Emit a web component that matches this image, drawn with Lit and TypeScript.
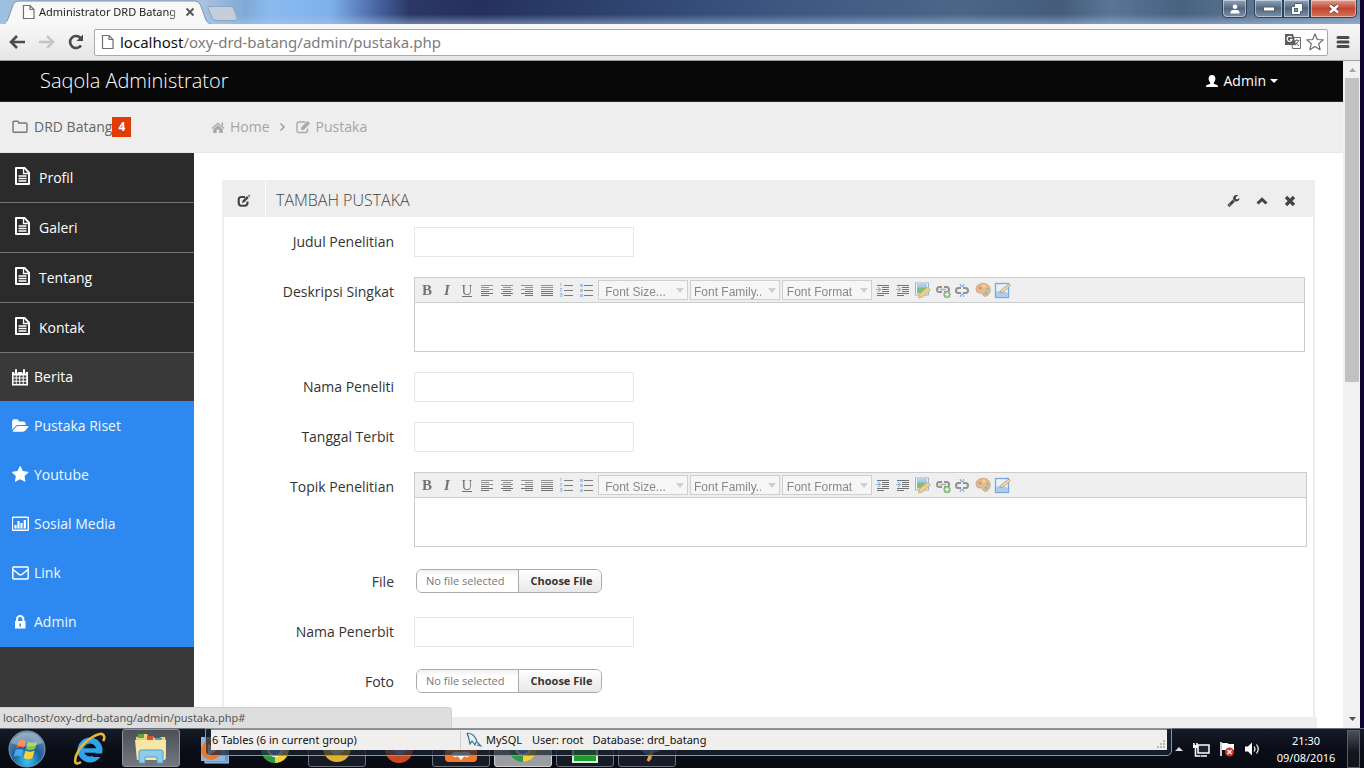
import { LitElement, html, svg, css } from "lit";
import { customElement, state } from "lit/decorators.js";

const STAR =
  "M1728 647q0 22-26 48l-363 354 86 500q1 7 1 20 0 21-10.5 35.5t-30.5 14.5q-19 0-40-12l-449-236-449 236q-22 12-40 12-21 0-31.5-14.5t-10.5-35.5q0-6 2-20l86-500-364-354q-25-27-25-48 0-37 56-46l502-73 225-455q19-41 49-41t49 41l225 455 502 73q56 9 56 46z";
const FOLDER_OPEN =
  "M1943 952q0 31-31 66l-336 396q-43 51-120.5 86.5t-143.5 35.5h-1088q-34 0-60.5-13t-26.5-43q0-31 31-66l336-396q43-51 120.5-86.5t143.5-35.5h1088q34 0 60.5 13t26.5 43zm-343-344v160h-832q-94 0-197 47.500t-164 119.500l-337 396-5 6q0-4-.5-12.500t-.5-12.500v-960q0-92 66-158t158-66h320q92 0 158 66t66 158v32h544q92 0 158 66t66 158z";
const WRENCH =
  "M448 1472q0-26-19-45t-45-19-45 19-19 45 19 45 45 19 45-19 19-45zm644-420l-682 682q-37 37-90 37-52 0-91-37l-106-108q-38-36-38-90 0-53 38-91l681-681q39 98 114.500 173.500t173.500 114.500zm634-435q0 39-23 106-47 134-164.500 217.500t-258.500 83.500q-185 0-316.500-131.500t-131.500-316.500 131.500-316.500 316.500-131.500q58 0 121.500 16.500t107.500 46.500q16 11 16 28t-16 28l-293 169v224l193 107q5-3 79-48.500t135.500-81 70.500-35.500q15 0 23.500 10t8.500 25z";

/* Shared icon wrapper: size in pixels, drawing in its own view box. */
const icon = (w: number, h: number, body: unknown, box = `0 0 ${w} ${h}`) =>
  html`<svg width=${w} height=${h} viewBox=${box} aria-hidden="true">${body}</svg>`;

const ICONS = {
  back: icon(18, 18, svg`<path d="M9 3L3 9l6 6M3.500 9H17" fill="none" stroke="#4b4b4b" stroke-width="2.600"/>`),
  forward: icon(18, 18, svg`<path d="M10 3l6 6-6 6M15.500 9H2" fill="none" stroke="#c4c4c4" stroke-width="2.400"/>`),
  reload: icon(18, 18, svg`<path d="M15 12.500A6 6 0 1 1 14.500 5" fill="none" stroke="#4b4b4b" stroke-width="2.600"/><path d="M17 1.500V8h-6.500z" fill="#4b4b4b"/>`),
  page: icon(14, 16, svg`<path d="M1.500 1.500H8l4 4v9H1.500zM8 1.500v4h4" fill="#fff" stroke="#6f6f6f" stroke-width="1.200"/>`),
  close: icon(10, 10, svg`<path d="M1.500 1.500l7 7M8.500 1.500l-7 7" stroke="#555" stroke-width="1.800"/>`),
  translate: icon(18, 18, svg`<path d="M7 4.500h9.500v11H8.500z" fill="#fff" stroke="#6a6a6a"/><path d="M1 1h8l3 11H1z" fill="#5d5d5d"/><path d="M7.800 4.600A2.500 2.500 0 1 0 8 6.500H6" fill="none" stroke="#fff" stroke-width="1.200"/><path d="M10.500 7.500h5M13 6v1.500M14.500 7.500q-1 3-3.500 5M11.500 8.500q1 3 3.500 4.500" fill="none" stroke="#777"/>`),
  star: icon(18, 18, svg`<path d="M9 1l2.300 5.500 5.900.4-4.500 3.900 1.400 5.900L9 13.500l-5.100 3.200 1.400-5.900L.8 6.900l5.900-.4z" fill="#fff" stroke="#6b6b6b" stroke-width="1.200" stroke-linejoin="round"/>`),
  menu: icon(14, 14, svg`<path d="M2 2.500h10M2 7h10M2 11.500h10" stroke="#4b4b4b" stroke-width="3" stroke-linecap="round"/>`),
  person: icon(10, 10, svg`<circle cx="5" cy="2.800" r="2.300" fill="#fff"/><path d="M.5 9.500V8Q1 6 3 6h4q2 0 2.500 2v1.500z" fill="#fff"/>`),
  minimize: icon(12, 6, svg`<rect x=".5" y="1" width="11" height="4" fill="#fff" stroke="#55616f"/>`),
  restore: icon(12, 12, svg`<path d="M3.500.5h8v8h-2v3h-9v-8h3z" fill="#fff" stroke="#55616f"/><rect x="3.500" y="5.500" width="3" height="3" fill="#8b99aa" stroke="#55616f"/>`),
  exit: icon(12, 10, svg`<path d="M2 1.500l8 7M10 1.500l-8 7" stroke="#6b3232" stroke-width="4"/><path d="M2 1.500l8 7M10 1.500l-8 7" stroke="#fff" stroke-width="2.600"/>`),
  user: icon(14, 14, svg`<path d="M7 1c2.300 0 3.400 1.600 3.400 3.600 0 1.800-.8 3.200-1.600 4v1.100c1.400.8 4.200 1 4.200 2.600V13H1v-.7c0-1.600 2.800-1.800 4.200-2.600V8.600c-.8-.8-1.600-2.200-1.600-4C3.600 2.600 4.700 1 7 1z" fill="#fff"/>`),
  folder: icon(17, 14, svg`<path d="M1 2.200q0-1 1-1h3.600q1 0 1 1v.8h7.400q1 0 1 1v7.300q0 1-1 1H2q-1 0-1-1z" fill="none" stroke="#777" stroke-width="1.400"/>`),
  home: icon(14, 13, svg`<path d="M7 1.500l6.500 5.600-.8.900L7 3.200 1.300 8l-.8-.900z" fill="#a9a9a9"/><path d="M10.500 1.500h1.600v4l-1.600-1.400zM7 4.200l4.800 4V12H8.300V8.800H5.700V12H2.200V8.200z" fill="#a9a9a9"/>`),
  angle: icon(7, 10, svg`<path d="M1.500 1.500L5 5 1.500 8.500" fill="none" stroke="#999" stroke-width="1.400"/>`),
  edit: icon(15, 14, svg`<path d="M9.500 2H3Q1 2 1 4v6.500q0 2 2 2h6.500q2 0 2-2V8.500" fill="none" stroke="#aaa" stroke-width="1.400"/><path d="M5.200 7.300L11.500 1l2.600 2.600-6.300 6.300H5.200z" fill="#aaa"/>`),
  panelEdit: icon(14, 14, svg`<path d="M8 3H4.500Q1.700 3 1.700 5.500v3.200Q1.700 11.700 4.500 11.700h3q3 0 3-3V7.500" fill="none" stroke="#444" stroke-width="2.100"/><path d="M5 9l.5-2.500 4.500-4.500 1.800 1.800L7.300 8.300zM11 1.500l1-.7 1.200 1.200-.8 1z" fill="#444"/>`),
  wrench: icon(13, 13, svg`<path d=${WRENCH} fill="#444"/>`, "0 0 1792 1792"),
  up: icon(12, 12, svg`<path d="M1.500 8.500L6 4.300l4.500 4.200" fill="none" stroke="#444" stroke-width="3"/>`),
  cross: icon(12, 12, svg`<path d="M2 2l8 8M10 2l-8 8" stroke="#444" stroke-width="3.200"/>`),
  doc: icon(15, 18, svg`<path d="M1 1h8.500L14 5.600V17H1z" fill="none" stroke="#fff" stroke-width="2" stroke-linejoin="round"/><path d="M8.500 1v5.500H14M3.500 9h8M3.500 11.500h8M3.500 14h8" fill="none" stroke="#fff" stroke-width="1.300"/>`),
  calendar: icon(17, 17, svg`<path d="M0 3h16v13.500H0z" fill="#fff"/><path d="M1.500 6.500h2.300v2H1.500zm3.200 0H7.200v2H4.700zm3.500 0h2.500v2H8.200zm3.500 0h2.600v2h-2.600zM1.500 9.500h2.300v2.300H1.500zm3.200 0h2.500v2.300H4.700zm3.500 0h2.500v2.300H8.200zm3.500 0h2.600v2.300h-2.600zM1.500 12.800h2.300v2.300H1.500zm3.200 0h2.500v2.300H4.700zm3.500 0h2.500v2.300H8.200zm3.500 0h2.600v2.300h-2.600z" fill="#444"/><path d="M4 1.200v3.300M12 1.200v3.300" stroke="#393939" stroke-width="3.400"/><path d="M4 1v3.300M12 1v3.300" stroke="#fff" stroke-width="2" stroke-linecap="round"/>`),
  folderOpen: icon(18, 16, svg`<path d=${FOLDER_OPEN} fill="#fff"/>`, "50 40 1943 1700"),
  starSolid: icon(17, 17, svg`<path d=${STAR} fill="#fff"/>`, "64 20 1728 1728"),
  chart: icon(17, 16, svg`<rect x=".3" y="1.300" width="16" height="13" rx="1" fill="none" stroke="#fff" stroke-width="1.600"/><path d="M3.500 9v3.500M6.500 5v7.500M9.500 7v5.500M12.800 4v8.500" stroke="#fff" stroke-width="2.200"/>`),
  mail: icon(17, 14, svg`<rect x=".8" y="1" width="15.400" height="12" rx="1" fill="none" stroke="#fff" stroke-width="1.500"/><path d="M1 3.500q3.500 3 6 4.800 1.500 1 3 0 2.500-1.800 6-4.800" fill="none" stroke="#fff" stroke-width="1.500"/>`),
  lock: icon(17, 14, svg`<path d="M3 6h10.500v7.500H3z" fill="#fff"/><path d="M5 6.500V4.200a3.200 3.200 0 0 1 6.400 0v2.300" fill="none" stroke="#fff" stroke-width="2"/><path d="M8.200 8.500v3" stroke="#2d89ef" stroke-width="1.600"/>`),
};

const lines = (rows: number[][]) =>
  svg`${rows.map(([x, w], i) => svg`<rect x=${x} y=${4 + i * 2} width=${w} height="1" fill=${i > 2 ? "#222" : "#555"}/>`)}`;

const chain = svg`<path d="M7 7H4.500a2.500 2.500 0 0 0 0 5H7M9 7h2.500a2.500 2.500 0 0 1 0 5H9" fill="none" stroke="#555" stroke-width="2"/>`;

const TOOLS_LEFT = [
  { name: "Bold", art: html`<b class="glyph">B</b>` },
  { name: "Italic", art: html`<b class="glyph"><i>I</i></b>` },
  { name: "Underline", art: html`<span class="glyph under">U</span>` },
  { name: "Align left", art: icon(18, 18, lines([[3, 12], [3, 8], [3, 12], [3, 8], [3, 12], [3, 8]])) },
  { name: "Align center", art: icon(18, 18, lines([[3, 12], [5, 8], [3, 12], [5, 8], [3, 12], [5, 8]])) },
  { name: "Align right", art: icon(18, 18, lines([[3, 12], [7, 8], [3, 12], [7, 8], [3, 12], [7, 8]])) },
  { name: "Justify", art: icon(18, 18, lines([[3, 12], [3, 12], [3, 12], [3, 12], [3, 12], [3, 12]])) },
  { name: "Ordered list", art: icon(18, 18, svg`<path d="M6 4.500h9M6 9.500h9M6 14.500h9" stroke="#333"/><path d="M2 2.500h1v3M2 7.500h2L2 10h2M2 12.500h2v1.200H2.500 4v1.600H2" fill="none" stroke="#6fa0e0"/>`) },
  { name: "Bullet list", art: icon(18, 18, svg`<path d="M6 4.500h9M6 9.500h9M6 14.500h9" stroke="#333"/><path d="M2 3h3v3H2zM2 8h3v3H2zM2 13h3v3H2z" fill="#7ba6dc"/>`) },
];

const indentArt = icon(18, 18, svg`<path d="M3 4.500h12M8 6.500h7M8 8.500h7M8 10.500h7M3 12.500h12M3 14.500h7" stroke="#222" stroke-width="1.200"/><path d="M2 8.500h4M4 6l2.500 2.500L4 11" fill="none" stroke="#5b8fd8" stroke-width="1.200"/>`);

const TOOLS_RIGHT = [
  { name: "Indent", art: indentArt },
  { name: "Outdent", art: indentArt },
  { name: "Image", art: icon(18, 18, svg`<rect x="1.500" y="2" width="13" height="12" fill="#fff" stroke="#5b8fc0"/><rect x="3" y="3.500" width="10" height="9" fill="#3f9a3f"/><path d="M3 3.500h10v3H3z" fill="#74b5e8"/><path d="M4.500 17l1-4 8-7 3 3-8 7z" fill="#f0b848" stroke="#b07a20" stroke-width=".8"/>`) },
  { name: "Add link", art: icon(18, 18, svg`<g transform="translate(1 -1)">${chain}<path d="M5 9.500h6" stroke="#888" stroke-width="1.600"/></g><circle cx="13" cy="13.500" r="3.600" fill="#3c9a2c"/><path d="M13 11.500v4M11 13.500h4" stroke="#fff" stroke-width="1.400"/>`) },
  { name: "Remove link", art: icon(18, 18, svg`${chain}<path d="M6 3l1.500 3M10 3L8.500 6M6 16l1.500-3M10 16l-1.500-3" stroke="#3d7bdc" stroke-width="1.200"/>`) },
  { name: "Text color", art: icon(18, 18, svg`<path d="M3 11Q0 5 6 3q6-2 9 2 3 5-1 9-3 3-5 0-1-3-3-2-2 0-3-1z" fill="#e09a50" stroke="#a8642a" stroke-width=".8"/><circle cx="6" cy="7" r="1.500" fill="#d44"/><circle cx="10" cy="5" r="1.500" fill="#fc4"/><circle cx="13.500" cy="8" r="1.500" fill="#4a6"/><circle cx="12" cy="12" r="1.500" fill="#48c"/>`) },
  { name: "Edit HTML", art: icon(18, 18, svg`<rect x="1.500" y="2.500" width="13" height="14" fill="#e6f1fd" stroke="#2f78cf" stroke-width="1.300"/><path d="M2 11q5-3 12 1v4H2z" fill="#7fb6ee"/><path d="M6 12l1-3 8-6 1.500 1.500L9 11z" fill="#f2cf78" stroke="#8a6a30" stroke-width=".8"/>`) },
];

const PAGES = ["Profil", "Galeri", "Tentang", "Kontak"];
const MODULES = [
  { label: "Pustaka Riset", art: ICONS.folderOpen },
  { label: "Youtube", art: ICONS.starSolid },
  { label: "Sosial Media", art: ICONS.chart },
  { label: "Link", art: ICONS.mail },
  { label: "Admin", art: ICONS.lock },
];

@customElement("app-root")
export class AppRoot extends LitElement {
  @state() private open = true;

  static styles = css`
    :host {
      display: flex;
      flex-direction: column;
      box-sizing: border-box;
      height: 100vh;
      padding-bottom: 4px;
      background: #fff;
      overflow: hidden;
      font-family: "Open Sans", "Noto Sans", sans-serif;
      font-size: 14px;
      line-height: 20px;
      color: #333;
    }
    * { box-sizing: border-box; }
    svg { display: block; flex: none; }
    a { color: inherit; text-decoration: none; }
    button { font: inherit; color: inherit; border: 0; margin: 0; padding: 0; background: none; display: flex; align-items: center; justify-content: center; }
    ul { list-style: none; margin: 0; padding: 0; }

    .desktop { flex: 1; min-height: 0; display: flex; padding-right: 4px; background: #0d0530; }
    .browser { flex: 1; min-width: 0; display: flex; flex-direction: column; }

    .strip {
      display: flex; height: 24px; padding-left: 6px; position: relative;
      background: linear-gradient(180deg, transparent 60%, rgba(170, 200, 235, 0.5)), linear-gradient(90deg, #9dbfe0 0, #a9c5df 200px, #7fa9d6 245px, #8abaf0 270px, #7fb0ea 330px, #4a68a4 375px, #2b3766 410px, #26305c 480px, #2a3c68 560px, #3b5580 760px, #4c6688 960px, #455c7c 1060px, #5a7596 1110px, #4a6282 1180px, #7690ac 100%);
      flex: none;
    }
    .tab { position: relative; width: 201px; padding-left: 16px; display: flex; align-items: center; gap: 3px; font-size: 12px; color: #222; }
    .tab-shape { position: absolute; left: 0; top: 0; }
    .tab > :not(.tab-shape) { position: relative; }
    .tab-title { flex: none; width: 141px; white-space: nowrap; font-family: "Noto Sans", sans-serif; font-size: 11px; -webkit-mask-image: linear-gradient(90deg, #000 92%, rgba(0, 0, 0, 0.3)); mask-image: linear-gradient(90deg, #000 92%, rgba(0, 0, 0, 0.3)); }
    .tab-close { margin-left: 2px; }
    .controls { margin-left: auto; margin-right: 3px; display: flex; height: 18px; }
    .controls button { height: 18px; border: 1px solid #2f4157; border-top: 0; box-shadow: inset 0 0 0 1px rgba(255, 255, 255, 0.45); background: linear-gradient(#8fa5bd, #53687f 50%, #7b92ab); }
    .profile { width: 25px; margin-right: 7px; border-radius: 0 0 5px 5px; }
    .min { width: 29px; border-radius: 0 0 0 5px; }
    .max { width: 27px; }
    .controls .shut { width: 47px; border-radius: 0 0 5px 0; background: linear-gradient(#e0a090, #c4452f 50%, #d4735a); }

    .toolbar { flex: none; height: 37px; display: flex; align-items: center; padding: 0 10px 0 8px; background: linear-gradient(#f8f8f8, #e6e6e6); border-bottom: 1px solid #a0a0a0; }
    .toolbar nav { display: flex; gap: 11px; }
    .omnibox { flex: 1; height: 27px; margin: 0 8px 0 10px; display: flex; align-items: center; padding: 0 3px 0 6px; gap: 4px; border: 1px solid #a9a9a9; border-radius: 2px; background: #fff; }
    .omnibox .address { flex: 1; font-family: "Noto Sans", sans-serif; font-size: 15px; color: #7c7c7c; padding-left: 1px; }
    .omnibox .address b { font-weight: 400; color: #111; }

    .view { flex: 1; min-height: 0; display: flex; }
    .page { flex: 1; min-width: 0; display: flex; flex-direction: column; background: #fff; overflow: hidden; }
    .scroll { width: 17px; padding: 0 1px 0 2px; display: flex; flex-direction: column; background: #f1f1f1; }
    .scroll button { height: 17px; }
    .thumb { height: 304px; background: #c1c1c1; }
    .scroll .down { margin-top: auto; }

    .brandbar { flex: none; height: 41px; padding: 0 65px 0 40px; display: flex; align-items: center; justify-content: space-between; background: #080808; color: #fff; border-bottom: 1px solid #2a2a2a; }
    .brand { font-size: 20px; font-weight: 300; }
    .account { gap: 5px; }
    .caret { border: 4px solid transparent; border-top-color: #fff; border-bottom: 0; }
    .account .caret { margin-left: -1px; }

    .crumbbar { flex: none; height: 51px; display: flex; align-items: center; background: #eee; border-bottom: 1px solid #e6e6e6; color: #a5a5a5; }
    .site { width: 211px; padding-left: 12px; display: flex; align-items: center; color: #666; }
    .site svg { margin-right: 5px; }
    .count { width: 19px; height: 20px; text-align: center; background: #e23c05; color: #fff; font-size: 12px; font-weight: 700; }
    .crumbs { display: flex; align-items: center; }
    .crumbs a, .crumbs span { display: flex; align-items: center; gap: 5px; }
    .crumbs > svg { margin: 0 10px 0 9px; }

    .columns { flex: 1; min-height: 0; display: flex; }
    .side { width: 194px; flex: none; background: #393939; color: #fff; }
    .side a { display: flex; align-items: center; height: 49px; padding-left: 12px; gap: 5px; }
    .side svg { width: 17px; }
    .side .news { height: 48px; }
    .side .pages a { height: 50px; padding-left: 15px; gap: 9px; background: #2b2b2b; border-bottom: 1px solid #757575; }
    .side .pages svg { width: 15px; margin-bottom: 3px; }
    .modules { padding-bottom: 1px; background: #2d89ef; }
    .modules a { color: #eef8ff; }

    .content { flex: 1; min-width: 0; padding: 27px 28px 0; }
    .panel { border: solid #eee; border-width: 0 2px; background: #fff; }
    .panel-head { height: 37px; display: flex; align-items: center; background: #eee; color: #444; }
    .panel-mark { width: 42px; height: 36px; padding: 4px 2px 0 0; border-right: 1px solid #fff; display: flex; align-items: center; justify-content: center; }
    .panel h2 { flex: 1; margin: 0; padding: 2px 0 0 10px; font-size: 16px; line-height: 20px; font-weight: 300; }
    .panel-actions { display: flex; gap: 16px; padding: 4px 17px 0 0; }
    .form { margin: 0; padding-top: 10px; }
    .row { display: flex; margin-bottom: 20px; }
    .row > label { width: 170px; margin-right: 20px; padding-top: 5px; text-align: right; flex: none; }
    .text { width: 220px; height: 30px; border: 1px solid #e8e8e8; background: #fff; font: inherit; padding: 4px 6px; border-radius: 0; outline: 0; }
    .form-foot { height: 60px; margin: 0 -4px 0 -2px; background: #eee; }

    .editor { flex: 1; min-width: 0; height: 75px; margin-right: 8px; border: 1px solid #ccc; display: flex; flex-direction: column; }
    .editor.wide { margin-right: 6px; }
    .tools { height: 25px; flex: none; display: flex; align-items: center; padding-left: 2px; background: #efefef; border-bottom: 1px solid #ccc; }
    .tools button, .pick { opacity: 0.6; }
    .tools button { width: 20px; height: 20px; }
    .glyph { font-family: "Liberation Serif", serif; font-size: 15px; line-height: 16px; color: #222; }
    .under { border-bottom: 1px solid #222; line-height: 12px; }
    .pick { position: relative; width: 90px; height: 20px; margin: 0 1px; }
    .pick select { display: block; width: 90px; height: 20px; appearance: none; border: 1px solid #bbb; border-radius: 0; background: #fcfcfc; padding: 3px 18px 0 3px; font: 12px "Liberation Sans", sans-serif; color: #444; text-align-last: center; overflow: hidden; }
    .pick .caret { position: absolute; right: 4px; top: 8px; border-top: 5px solid #bbb; pointer-events: none; }
    .editor textarea { flex: 1; border: 0; resize: none; outline: 0; font: inherit; padding: 4px; background: #fff; }

    .file { position: relative; margin: 2px 0 4px 2px; width: 186px; height: 24px; display: flex; border: 1px solid #aaa; border-radius: 6px; font-size: 11px; line-height: 22px; overflow: hidden; }
    .file-name { width: 102px; padding-left: 9px; color: #777; background: linear-gradient(#f0f0f0, #fff 30%); border-right: 1px solid #aaa; }
    .file-pick { flex: 1; padding-left: 3px; text-align: center; font-weight: 700; background: linear-gradient(#fff, #e8e8e8); }
    .file input { position: absolute; inset: 0; width: 100%; opacity: 0; }

    .bubble { position: absolute; left: 0; bottom: 44px; width: 452px; height: 21px; padding: 0 3px; background: #dedede; border: solid #cfcfcf; border-width: 1px 1px 0 0; border-radius: 0 4px 0 0; font-family: "Noto Sans", sans-serif; font-size: 11px; color: #555; }

    .taskbar { flex: none; position: relative; height: 40px; display: flex; align-items: center; background: linear-gradient(#151b28, #0b0e18 50%, #080a12); border-top: 1px solid #6b727c; color: #fff; }
    .launch { display: flex; }
    .launch button { width: 62px; height: 39px; }
    .launch .start { width: 58px; padding-right: 4px; }
    .launch .lit { width: 58px; height: 38px; margin: 0 2px; border: 1px solid #8f949b; border-radius: 3px; background: linear-gradient(#4b4f56, #74787e); }
    .launch .run { width: 58px; height: 38px; margin: 0 2px; border: 1px solid #6c727c; border-radius: 3px; background: #171b26; }
    .launch .live { background: #9b9da3; border-color: #d0d2d6; }
    .tray { margin-left: auto; display: flex; align-items: center; height: 39px; gap: 9px; font-family: "Noto Sans", sans-serif; font-size: 11px; line-height: 17px; text-align: center; }
    .tray time { width: 64px; margin-left: 5px; }
    .peek { width: 13px; height: 38px; margin-right: 4px; border: 1px solid #596069; background: linear-gradient(#4a4e55, #12151c 60%); }

    .dbwin { position: absolute; left: 205px; right: 192px; top: -1px; height: 28px; padding: 0 4px 5px 5px; border: 1px solid #8e959f; border-radius: 0 0 5px 5px; background: rgba(25, 34, 50, 0.72); }
    .dbstatus { height: 21px; display: flex; align-items: center; padding-left: 1px; background: #f0efee; border-top: 1px solid #8a8a8a; color: #111; font-family: "Noto Sans", sans-serif; font-size: 11px; line-height: 18px; white-space: pre; }
    .dbstatus .tables { width: 249px; border-right: 1px solid #cfcfcf; }
    .dbstatus svg { margin: 0 4px 0 5px; }
    .dbstatus .user { padding: 0 9px 0 10px; }
    .dbstatus .grip { margin-left: auto; }
    .dbstatus .grip svg { margin: 6px 0 0; }
  `;

  private editor(id: string, wide: boolean) {
    return html`<div class="editor ${wide ? "wide" : ""}">
      <div class="tools">
        ${TOOLS_LEFT.map((t) => html`<button type="button" aria-label=${t.name}>${t.art}</button>`)}
        ${["Font Size...", "Font Family...", "Font Format"].map(
          (name) => html`<div class="pick"><select aria-label=${name}><option>${name}</option></select><span class="caret"></span></div>`
        )}
        ${TOOLS_RIGHT.map((t) => html`<button type="button" aria-label=${t.name}>${t.art}</button>`)}
      </div>
      <textarea id=${id}></textarea>
    </div>`;
  }

  private textRow(id: string, label: string) {
    return html`<div class="row"><label for=${id}>${label}</label><input class="text" id=${id} type="text" /></div>`;
  }

  private editorRow(id: string, label: string, wide: boolean) {
    return html`<div class="row"><label for=${id}>${label}</label>${this.editor(id, wide)}</div>`;
  }

  private fileRow(id: string, label: string) {
    return html`<div class="row">
      <label for=${id}>${label}</label>
      <div class="file"><span class="file-name">No file selected</span><span class="file-pick">Choose File</span><input id=${id} type="file" /></div>
    </div>`;
  }

  private browserTop() {
    return html`
      <div class="strip">
        <div class="tab">
          <svg class="tab-shape" width="232" height="24" viewBox="0 0 232 24" aria-hidden="true">
            <path d="M-6 24.500Q0 24 2 19L7 5Q8.500 1 12 1h177q4 0 5.500 4l5 14q2 5 7 5.500z" fill="#f8f8f8" stroke="#7d93ab" />
            <path d="M202 6.500h22q3 0 4 3l3 8q1 3-2 3h-19q-3 0-4-3l-4-10z" fill="#c3cfdd" stroke="#8ea5bf" />
          </svg>
          ${ICONS.page}<span class="tab-title">Administrator DRD Batang</span>
          <button class="tab-close" aria-label="Close tab">${ICONS.close}</button>
        </div>
        <div class="controls">
          <button class="profile" aria-label="Profile">${ICONS.person}</button>
          <button class="min" aria-label="Minimize">${ICONS.minimize}</button>
          <button class="max" aria-label="Restore">${ICONS.restore}</button>
          <button class="shut" aria-label="Close">${ICONS.exit}</button>
        </div>
      </div>
      <div class="toolbar">
        <nav>
          <button aria-label="Back">${ICONS.back}</button>
          <button aria-label="Forward">${ICONS.forward}</button>
          <button aria-label="Reload">${ICONS.reload}</button>
        </nav>
        <div class="omnibox">
          ${ICONS.page}<span class="address"><b>localhost</b>/oxy-drd-batang/admin/pustaka.php</span>
          <button aria-label="Translate">${ICONS.translate}</button>
          <button aria-label="Bookmark">${ICONS.star}</button>
        </div>
        <button aria-label="Menu">${ICONS.menu}</button>
      </div>`;
  }

  private sidebar() {
    return html`<nav class="side">
      <ul class="pages">${PAGES.map((p) => html`<li><a href="#">${ICONS.doc}${p}</a></li>`)}</ul>
      <a class="news" href="#">${ICONS.calendar}Berita</a>
      <ul class="modules">${MODULES.map((m) => html`<li><a href="#">${m.art}${m.label}</a></li>`)}</ul>
    </nav>`;
  }

  private panel() {
    return html`<section class="panel">
      <header class="panel-head">
        <span class="panel-mark">${ICONS.panelEdit}</span>
        <h2>TAMBAH PUSTAKA</h2>
        <div class="panel-actions">
          <button aria-label="Settings">${ICONS.wrench}</button>
          <button aria-label="Collapse" @click=${() => (this.open = !this.open)}>${ICONS.up}</button>
          <button aria-label="Close panel">${ICONS.cross}</button>
        </div>
      </header>
      ${this.open
        ? html`<form class="form">
            ${this.textRow("judul", "Judul Penelitian")} ${this.editorRow("deskripsi", "Deskripsi Singkat", false)}
            ${this.textRow("peneliti", "Nama Peneliti")} ${this.textRow("tanggal", "Tanggal Terbit")}
            ${this.editorRow("topik", "Topik Penelitian", true)} ${this.fileRow("file", "File")}
            ${this.textRow("penerbit", "Nama Penerbit")} ${this.fileRow("foto", "Foto")}
            <div class="form-foot"></div>
          </form>`
        : null}
    </section>`;
  }

  private chromeLogo() {
    return icon(32, 32, svg`<circle cx="16" cy="16" r="14" fill="#2f9a48"/><path d="M16 16L29 11A14 14 0 0 1 16 30z" fill="#f3cf3a"/><path d="M16 16L4 9A14 14 0 0 1 29 11z" fill="#d8402f"/><circle cx="16" cy="16" r="7" fill="#5fa8e8" stroke="#fff" stroke-width="2"/>`);
  }

  private taskbar() {
    return html`<footer class="taskbar">
      <div class="launch">
        <button class="start" aria-label="Start">
          ${icon(40, 38, svg`<defs><radialGradient id="orb" cx=".5" cy=".85" r=".8"><stop offset="0" stop-color="#35c8f5"/><stop offset=".5" stop-color="#1c5f9c"/><stop offset="1" stop-color="#6d8ba6"/></radialGradient></defs><circle cx="20" cy="19" r="18" fill="url(#orb)" stroke="#7f9bb0"/><path d="M11 11q4-3 8 0l-2 7q-4-2-8 0z" fill="#e8622c"/><path d="M21 11.500q4 2.500 9 0l-2 7.500q-5 2-9 0z" fill="#8cc63c"/><path d="M8.500 20q4-2 8 0l-2 7q-4-3-8 0z" fill="#4aa8ec"/><path d="M18.500 20.500q4 2.500 9 0l-2 7.500q-4 2.500-9 0z" fill="#fcd03c"/><path d="M4 13Q9 3 20 2.500T36 13Q20 20 4 13z" fill="#fff" opacity=".3"/>`)}
        </button>
        <button aria-label="Internet Explorer">
          ${icon(36, 36, svg`<circle cx="19" cy="19" r="9.500" fill="none" stroke="#2fa4ea" stroke-width="6"/><path d="M12 19.500h17" stroke="#2fa4ea" stroke-width="4.500"/><path d="M22 22.500h9v3.500h-9z" fill="#10141f"/><path d="M10 31Q2 36 5 25 9 14 20 7T33 5q1 2-1 5" fill="none" stroke="#e9b63a" stroke-width="2.600"/>`)}
        </button>
        <button class="lit" aria-label="Explorer">
          ${icon(36, 34, svg`<path d="M3 6l5-1V3h6l1 2h5l1 2h6l1-1h4l1 5v17H4z" fill="#ecd27c"/><path d="M5 3h6v4H5z" fill="#58a83c"/><path d="M14 5h6v4h-6z" fill="#d0552c"/><path d="M22 7h7v3h-7z" fill="#4aa3d8"/><path d="M2 9h31l-1 20H4z" fill="#f8e6a4"/><path d="M6 32V21q0-2 2-2h20q2 0 2 2v11h-6v-6H12v6z" fill="#8ccbec" stroke="#4e9fce"/>`)}
        </button>
        <button aria-label="Media Player">${icon(32, 32, svg`<rect x="8" y="6" width="24" height="24" fill="#6d9cc6" stroke="#a8c8e0"/><rect x="4" y="4" width="24" height="24" fill="#8fb6d8"/><circle cx="14" cy="17" r="10" fill="#e87830"/><path d="M11 11l9 6-9 6z" fill="#fff"/>`)}</button>
        <button aria-label="Chrome">${this.chromeLogo()}</button>
        <button class="run" aria-label="Chrome Canary">${icon(32, 32, svg`<circle cx="16" cy="16" r="14" fill="#e2b32c"/><circle cx="16" cy="16" r="7" fill="#fbe99a"/>`)}</button>
        <button aria-label="Firefox">${icon(32, 32, svg`<circle cx="16" cy="16" r="14" fill="#c94a20"/><circle cx="17" cy="14" r="8" fill="#8296d0"/>`)}</button>
        <button class="run" aria-label="XAMPP">${icon(32, 32, svg`<rect x="0" y="1" width="32" height="29" rx="4" fill="#f07828"/><path d="M8 24a5 5 0 0 1 8 0 5 5 0 0 1 8 0" fill="none" stroke="#fff" stroke-width="5"/>`)}</button>
        <button class="run live" aria-label="Chrome window">${this.chromeLogo()}</button>
        <button class="run" aria-label="Terminal">${icon(26, 30, svg`<rect x="1" y="1" width="24" height="28" fill="#1f9a2e" stroke="#d8f0d8" stroke-width="2"/>`)}</button>
        <button class="run" aria-label="SQL client">${icon(30, 30, svg`<path d="M4 8q10-10 20 2l4 8q-10 2-8 8l-4 3 1-6q-10-4-13-15z" fill="#4b84ac"/><path d="M16 28l4-10" stroke="#e8a030" stroke-width="3"/>`)}</button>
      </div>
      <div class="tray">
        ${icon(8, 6, svg`<path d="M0 5l4-4 4 4z" fill="#ddd"/>`)}
        ${icon(18, 18, svg`<rect x="8" y="5" width="11" height="8" fill="#1d2430" stroke="#fff" stroke-width="1.500"/><path d="M11 16h6M4 3v3M7 3v3M5.500 8v8h5" stroke="#fff" stroke-width="1.600" fill="none"/><rect x="3" y="5" width="5" height="3" fill="#fff"/>`, "2 0 18 18")}
        ${icon(16, 18, svg`<path d="M2 2v14" stroke="#fff" stroke-width="1.600"/><path d="M3 3h5l2 1h5v6H3z" fill="#fff"/><circle cx="10.500" cy="12" r="4.500" fill="#d8302c"/><path d="M8.500 10l4 4M12.500 10l-4 4" stroke="#fff" stroke-width="1.400"/>`)}
        ${icon(16, 18, svg`<path d="M1 6.500h3L8 2.500v13l-4-4H1z" fill="#fff"/><path d="M10 6.500q2 2.500 0 5M12.500 4.500q3.500 4.500 0 9" fill="none" stroke="#fff" stroke-width="1.200"/>`)}
        <time>21:30<br />09/08/2016</time>
        <div class="peek"></div>
      </div>
      <div class="dbwin">
        <div class="dbstatus">
          <span class="tables">6 Tables (6 in current group)</span>
          ${icon(16, 16, svg`<path d="M1 1q6 0 9 6l1 3 4 4-4-1M2 3l2 9 2-3 3 4 1-3M1 1l1 3" fill="none" stroke="#2b7898" stroke-width="1.200"/>`)}
          <span>MySQL</span><span class="user">User: root</span><span>Database: drd_batang</span>
          <span class="grip">${icon(12, 12, svg`<path d="M8 3h2v2H8zM5 6h2v2H5zM8 6h2v2H8zM2 9h2v2H2zM5 9h2v2H5zM8 9h2v2H8z" fill="#b8b8b8"/>`)}</span>
        </div>
      </div>
    </footer>`;
  }

  render() {
    return html`
      <div class="desktop">
        <div class="browser">
          ${this.browserTop()}
          <div class="view">
            <div class="page">
              <header class="brandbar">
                <a class="brand" href="#">Saqola Administrator</a>
                <button class="account">${ICONS.user}<span>Admin</span><span class="caret"></span></button>
              </header>
              <div class="crumbbar">
                <div class="site">${ICONS.folder}DRD Batang<span class="count">4</span></div>
                <nav class="crumbs"><a href="#">${ICONS.home}Home</a>${ICONS.angle}<span>${ICONS.edit}Pustaka</span></nav>
              </div>
              <div class="columns">${this.sidebar()}<main class="content">${this.panel()}</main></div>
            </div>
            <div class="scroll">
              <button aria-label="Scroll up">${icon(9, 5, svg`<path d="M1 5l3.500-4L8 5z" fill="#a3a3a3"/>`)}</button>
              <div class="thumb"></div>
              <button class="down" aria-label="Scroll down">${icon(9, 5, svg`<path d="M1 0l3.500 4L8 0z" fill="#505050"/>`)}</button>
            </div>
          </div>
        </div>
      </div>
      ${this.taskbar()}
      <div class="bubble">localhost/oxy-drd-batang/admin/pustaka.php#</div>
    `;
  }
}
